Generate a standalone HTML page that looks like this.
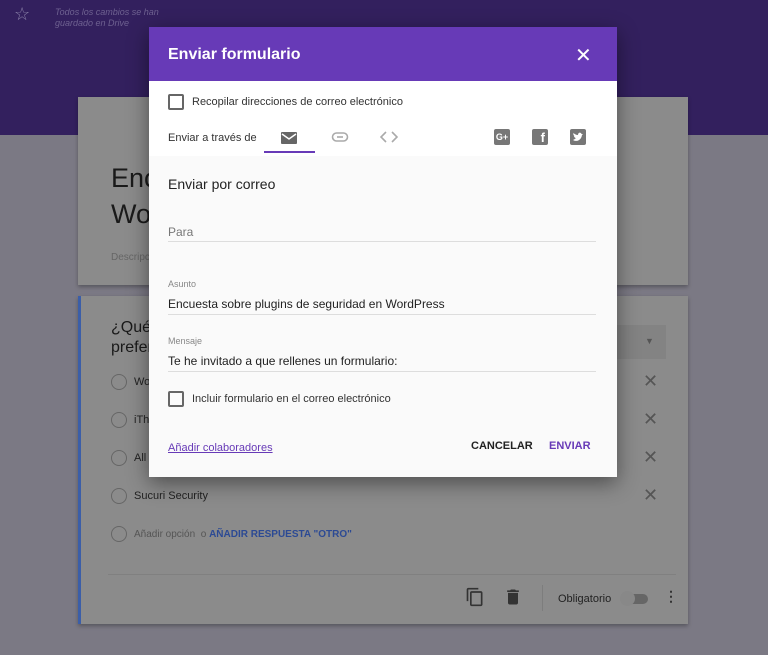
<!DOCTYPE html>
<html><head><meta charset="utf-8"><style>
*{margin:0;padding:0;box-sizing:border-box}
body{width:768px;height:655px;position:relative;overflow:hidden;font-family:"Liberation Sans",sans-serif;background:#7b7984}
.top{position:absolute;left:0;top:0;width:768px;height:135px;background:#33205e}
.card{position:absolute;background:#8b8b8b;box-shadow:0 2px 4px rgba(0,0,0,.3)}
.t{position:absolute;white-space:nowrap}
.dlg{position:absolute;left:149px;top:27px;width:468px;height:450px;background:#fafafa;box-shadow:0 6px 20px rgba(0,0,0,.45)}
.hd{height:54px;background:#673ab7;position:relative}
.cb{position:absolute;width:16px;height:16px;border:2px solid #666;border-radius:2px}
.line{position:absolute;height:1px;background:#ddd}
.rad{position:absolute;width:16px;height:16px;border:1.5px solid #666;border-radius:50%}
.x{position:absolute;color:#555;font-size:18px}
</style></head><body>
<div class="top"></div>
<div class="t" style="left:14px;top:4px;color:#8a80a8;font-size:18px">☆</div>
<div class="t" style="left:55px;top:7px;color:#6e6190;font-size:9px;font-style:italic;line-height:11px">Todos los cambios se han<br>guardado en Drive</div>
<div class="card" style="left:78px;top:97px;width:610px;height:188px"></div>
<div class="t" style="left:111px;top:163px;font-size:27px;color:#1a1a1a">Enc</div>
<div class="t" style="left:111px;top:199px;font-size:27px;color:#1a1a1a">Wo</div>
<div class="t" style="left:111px;top:252px;font-size:10px;color:#666">Descripc</div>
<div class="card" style="left:78px;top:296px;width:610px;height:328px;border-left:3px solid #3b5ea8"></div>
<div class="t" style="left:111px;top:318px;font-size:16px;color:#1a1a1a;line-height:20px">¿Qué<br>prefer</div>
<div style="position:absolute;left:600px;top:325px;width:66px;height:34px;background:#838383"></div>
<div class="t" style="left:645px;top:336px;font-size:9px;color:#555">▼</div>
<div class="rad" style="left:111px;top:374px"></div><div class="t" style="left:134px;top:376px;font-size:11px;color:#222">Wo</div>
<div class="rad" style="left:111px;top:412px"></div><div class="t" style="left:134px;top:414px;font-size:11px;color:#222">iTh</div>
<div class="rad" style="left:111px;top:450px"></div><div class="t" style="left:134px;top:452px;font-size:11px;color:#222">All</div>
<div class="rad" style="left:111px;top:488px"></div><div class="t" style="left:134px;top:490px;font-size:11px;color:#222">Sucuri Security</div>
<div class="rad" style="left:111px;top:526px"></div><div class="t" style="left:134px;top:529px;font-size:10px;color:#555">Añadir opción &nbsp;o <span style="color:#2c4a94;font-weight:bold">AÑADIR RESPUESTA "OTRO"</span></div>
<div class="x" style="left:643px;top:371px">✕</div><div class="x" style="left:643px;top:409px">✕</div><div class="x" style="left:643px;top:447px">✕</div><div class="x" style="left:643px;top:485px">✕</div>
<div class="line" style="left:108px;top:574px;width:568px;background:#808080"></div>
<svg style="position:absolute;left:465px;top:587px" width="20" height="20" viewBox="0 0 24 24"><path fill="#333" d="M16 1H4c-1.1 0-2 .9-2 2v14h2V3h12V1zm3 4H8c-1.1 0-2 .9-2 2v14c0 1.1.9 2 2 2h11c1.100 0 2-.9 2-2V7c0-1.1-.9-2-2-2zm0 16H8V7h11v14z"/></svg>
<svg style="position:absolute;left:503px;top:587px" width="20" height="20" viewBox="0 0 24 24"><path fill="#333" d="M6 19c0 1.1.9 2 2 2h8c1.1 0 2-.9 2-2V7H6v12zM19 4h-3.5l-1-1h-5l-1 1H5v2h14V4z"/></svg>
<div style="position:absolute;left:542px;top:585px;width:1px;height:26px;background:#7d7d7d"></div>
<div class="t" style="left:558px;top:593px;font-size:11px;color:#222">Obligatorio</div>
<div style="position:absolute;left:624px;top:594px;width:24px;height:10px;border-radius:5px;background:#666"></div>
<div style="position:absolute;left:620px;top:591px;width:15px;height:15px;border-radius:50%;background:#888"></div>
<div class="t" style="left:664px;top:588px;font-size:14px;color:#333;font-weight:bold">⋮</div>

<div class="dlg">
<div class="hd"><div class="t" style="left:19px;top:19px;color:#fff;font-size:16px;font-weight:bold">Enviar formulario</div>
<div class="t" style="left:426px;top:16px;color:#fff;font-size:20px">✕</div></div>
<div style="position:absolute;left:0;top:54px;width:468px;height:75px;background:#fff"></div>
<div class="cb" style="left:19px;top:67px"></div>
<div class="t" style="left:43px;top:69px;font-size:11px;color:#333">Recopilar direcciones de correo electrónico</div>
<div class="t" style="left:19px;top:105px;font-size:11px;color:#333">Enviar a través de</div>
<svg style="position:absolute;left:131px;top:103px" width="18" height="16" viewBox="0 0 18 16"><rect x="1" y="2" width="16" height="12" rx="1" fill="#666"/><path d="M2 4l7 5 7-5" stroke="#fff" stroke-width="1.5" fill="none"/></svg>
<div style="position:absolute;left:115px;top:124px;width:51px;height:2px;background:#673ab7"></div>
<svg style="position:absolute;left:182px;top:104px" width="18" height="12" viewBox="0 0 18 12"><rect x="1.5" y="2" width="15" height="8" rx="4" fill="none" stroke="#aaa" stroke-width="1.6"/><path d="M6 6h6" stroke="#aaa" stroke-width="1.6"/></svg>
<svg style="position:absolute;left:231px;top:104px" width="18" height="12" viewBox="0 0 18 12"><path d="M6 1L1 6l5 5M12 1l5 5-5 5" stroke="#aaa" stroke-width="1.6" fill="none"/></svg>
<div style="position:absolute;left:345px;top:102px;width:16px;height:16px;background:#777;border-radius:2px;color:#fff;font-size:9px;font-weight:bold;text-align:center;line-height:16px">G+</div>
<div style="position:absolute;left:383px;top:102px;width:16px;height:16px;background:#777;border-radius:2px;color:#fff;font-size:13px;font-weight:bold;text-align:right;padding-right:3px;line-height:18px">f</div>
<svg style="position:absolute;left:421px;top:102px" width="16" height="16" viewBox="0 0 16 16"><rect width="16" height="16" rx="2" fill="#777"/><path d="M3 11c3 2 8 1 9-5l1-1h-1.5C11 3 8 3 8 6C6 6 4.5 5 3.5 4c-.5 1 0 2.5 1 3H4c0 1 1 2 2 2-1 1-2 1.500-3 2z" fill="#fff"/></svg>
<div class="t" style="left:19px;top:149px;font-size:14px;color:#222">Enviar por correo</div>
<div class="t" style="left:19px;top:198px;font-size:12px;color:#777">Para</div>
<div class="line" style="left:19px;top:214px;width:428px"></div>
<div class="t" style="left:19px;top:252px;font-size:9px;color:#888">Asunto</div>
<div class="t" style="left:19px;top:270px;font-size:12px;color:#222">Encuesta sobre plugins de seguridad en WordPress</div>
<div class="line" style="left:19px;top:287px;width:428px"></div>
<div class="t" style="left:19px;top:309px;font-size:9px;color:#888">Mensaje</div>
<div class="t" style="left:19px;top:327px;font-size:12px;color:#222">Te he invitado a que rellenes un formulario:</div>
<div class="line" style="left:19px;top:344px;width:428px"></div>
<div class="cb" style="left:19px;top:364px"></div>
<div class="t" style="left:43px;top:366px;font-size:11px;color:#333">Incluir formulario en el correo electrónico</div>
<div class="t" style="left:19px;top:415px;font-size:11px;color:#673ab7;text-decoration:underline">Añadir colaboradores</div>
<div class="t" style="left:322px;top:413px;font-size:11px;color:#222;font-weight:bold">CANCELAR</div>
<div class="t" style="left:400px;top:413px;font-size:11px;color:#673ab7;font-weight:bold">ENVIAR</div>
</div>
</body></html>
